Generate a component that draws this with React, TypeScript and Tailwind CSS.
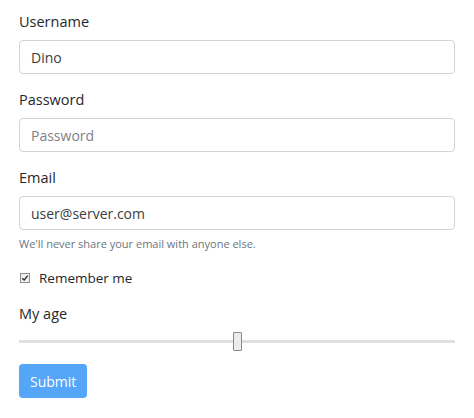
import { useState } from "react";

const App = () => {
  const [username, setUsername] = useState("Dino");
  const [password, setPassword] = useState("");
  const [email, setEmail] = useState("user@server.com");
  const [remember, setRemember] = useState(true);
  const [age, setAge] = useState(50);

  return (
    <div className="min-h-screen bg-white font-['Open_Sans',sans-serif] text-[#25282b]">
      <form className="px-[19px] pt-[11px]" onSubmit={(e) => e.preventDefault()}>
        <div className="mb-[15px]">
          <label className="mb-[7px] block text-[14.5px] leading-[22px]">Username</label>
          <input
            value={username}
            onChange={(e) => setUsername(e.target.value)}
            className="block h-[34px] w-full rounded-[4px] border border-[#ced4da] px-[11px] text-[14px] text-[#3a3d40] outline-none"
          />
        </div>

        <div className="mb-[15px]">
          <label className="mb-[7px] block text-[14.5px] leading-[22px]">Password</label>
          <input
            type="password"
            placeholder="Password"
            value={password}
            onChange={(e) => setPassword(e.target.value)}
            className="block h-[34px] w-full rounded-[4px] border border-[#ced4da] px-[11px] text-[14px] outline-none placeholder:text-[#7d8288]"
          />
        </div>

        <div className="mb-[14px]">
          <label className="mb-[7px] block text-[14.5px] leading-[22px]">Email</label>
          <input
            type="email"
            value={email}
            onChange={(e) => setEmail(e.target.value)}
            className="block h-[34px] w-full rounded-[4px] border border-[#ced4da] px-[11px] text-[14px] text-[#3a3d40] outline-none"
          />
          <small className="mt-[5px] block text-[11px] leading-[18px] text-[#6c757d]">
            We'll never share your email with anyone else.
          </small>
        </div>

        <label className="mb-[14px] flex cursor-pointer items-center gap-[9px] text-[13.5px] leading-[22px]">
          <input
            type="checkbox"
            checked={remember}
            onChange={(e) => setRemember(e.target.checked)}
            className="sr-only"
          />
          <span className="ml-px flex h-[10px] w-[10px] items-center justify-center border border-[#8f8f8f] bg-[#f0f0f0]">
            {remember && (
              <svg viewBox="0 0 10 10" className="h-[8px] w-[8px]">
                <path d="M1.5 5.2 L4 7.5 L8.5 2" fill="none" stroke="#333" strokeWidth="1.8" />
              </svg>
            )}
          </span>
          Remember me
        </label>

        <div className="mb-[13px]">
          <label className="mb-[6px] block text-[14.5px] leading-[22px]">My age</label>
          <input
            type="range"
            min={0}
            max={100}
            value={age}
            onChange={(e) => setAge(Number(e.target.value))}
            className="block h-[20px] w-full cursor-pointer appearance-none bg-transparent [&::-webkit-slider-runnable-track]:h-[3px] [&::-webkit-slider-runnable-track]:bg-[#e0dfdb] [&::-webkit-slider-thumb]:mt-[-8px] [&::-webkit-slider-thumb]:h-[19px] [&::-webkit-slider-thumb]:w-[9px] [&::-webkit-slider-thumb]:appearance-none [&::-webkit-slider-thumb]:rounded-[1px] [&::-webkit-slider-thumb]:border [&::-webkit-slider-thumb]:border-[#8a8a8a] [&::-webkit-slider-thumb]:bg-[#ececec]"
          />
        </div>

        <button
          type="submit"
          className="h-[34px] rounded-[4px] bg-[#55a6f8] px-[11px] text-[14px] text-white"
        >
          Submit
        </button>
      </form>
    </div>
  );
};

export default App;
